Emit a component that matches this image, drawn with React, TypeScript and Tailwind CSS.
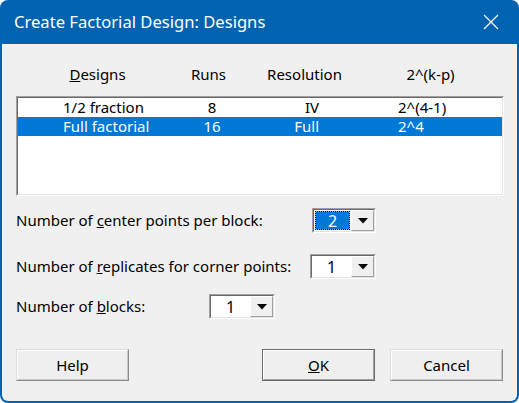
import React from "react";

const FONT = "font-['Noto_Sans',_'Open_Sans',_sans-serif]";

function Arrow() {
  return (
    <svg width="10" height="6" viewBox="0 0 10 6" aria-hidden="true">
      <path d="M0 0 H10 L5 5.5 Z" fill="#000" />
    </svg>
  );
}

function Combo({ value, width, focused }: { value: string; width: string; focused?: boolean }) {
  return (
    <div
      className={`${width} h-[25px] border border-t-[#a0a0a0] border-l-[#a0a0a0] border-b-white border-r-white`}
    >
      <div className="flex h-full border border-t-[#696969] border-l-[#696969] border-b-[#e3e3e3] border-r-[#e3e3e3] bg-white">
        <div className="flex flex-1 items-center p-px">
          {focused ? (
            <div className="h-full w-full bg-[#e89a3c]">
              <div className="flex h-full w-full items-center justify-center border border-dotted border-black bg-[#0078d7] bg-clip-padding text-[16px] leading-none text-white">
                {value}
              </div>
            </div>
          ) : (
            <div className="flex h-full w-full items-center justify-center text-[16px] leading-none text-black">
              {value}
            </div>
          )}
        </div>
        <div className="flex w-[23px] items-center justify-center border border-t-white border-l-white border-b-[#a0a0a0] border-r-[#a0a0a0] bg-[#f0f0f0]">
          <Arrow />
        </div>
      </div>
    </div>
  );
}

function Button({ label, def }: { label: React.ReactNode; def?: boolean }) {
  return (
    <button
      type="button"
      className={`flex h-[32px] w-[113px] items-center justify-center text-[15px] text-black ${
        def ? "border border-[#6b6b6b]" : "border border-t-[#dcdcdc] border-l-[#dcdcdc] border-b-[#8c8c8c] border-r-[#8c8c8c]"
      }`}
    >
      <span
        className={`flex h-full w-full items-center justify-center bg-[#efefef] ${
          def ? "border border-t-white border-l-white border-b-[#a0a0a0] border-r-[#a0a0a0]" : "border border-t-white border-l-white border-b-[#c8c8c8] border-r-[#c8c8c8]"
        }`}
      >
        {label}
      </span>
    </button>
  );
}

const rows = [
  { design: "1/2 fraction", runs: "8", res: "IV", exp: "2^(4-1)", selected: false },
  { design: "Full factorial", runs: "16", res: "Full", exp: "2^4", selected: true },
];

export default function App() {
  return (
    <div className={`h-[403px] w-[519px] bg-white ${FONT}`}>
      <div className="flex h-full flex-col overflow-hidden rounded-[8px] bg-[#0063b1] px-[2px] pb-[2px]">
        <div className="flex h-[44px] shrink-0 items-center justify-between pl-[12px] pr-[18px] text-white">
          <span className="text-[16.6px] leading-none">Create Factorial Design: Designs</span>
          <svg width="16" height="16" viewBox="0 0 16 16" aria-hidden="true">
            <path d="M1 1 L15 15 M15 1 L1 15" stroke="#fff" strokeWidth="1.2" />
          </svg>
        </div>

        <div className="flex flex-1 flex-col rounded-b-[6px] bg-[#f0f0f0] px-[14px] pt-[20px] text-black">
          <div className="flex h-[20px] items-center text-[15px] leading-none">
            <span className="w-[163px] text-center">
              <u>D</u>esigns
            </span>
            <span className="w-[59px] text-center">Runs</span>
            <span className="w-[133px] text-center">Resolution</span>
            <span className="w-[119px] text-center">2^(k-p)</span>
          </div>

          <div className="mt-[12px] h-[100px] w-[488px] border border-t-[#a0a0a0] border-l-[#a0a0a0] border-b-white border-r-white">
            <div className="h-full border border-t-[#696969] border-l-[#696969] border-b-[#e3e3e3] border-r-[#e3e3e3] bg-white">
              {rows.map((r) => (
                <div
                  key={r.design}
                  className={`grid h-[19px] grid-cols-[162px_64px_75px_1fr] items-center text-[15px] leading-none ${
                    r.selected ? "bg-[#0078d7] text-white" : "text-black"
                  }`}
                >
                  <span className="pl-[45px]">{r.design}</span>
                  <span className="text-center">{r.runs}</span>
                  <span className="text-right">{r.res}</span>
                  <span className="pl-[79px]">{r.exp}</span>
                </div>
              ))}
            </div>
          </div>

          <div className="mt-[12px] flex items-center text-[15px]">
            <span className="w-[296px]">
              Number of <u>c</u>enter points per block:
            </span>
            <Combo value="2" width="w-[64px]" focused />
          </div>

          <div className="mt-[21px] flex items-center text-[15px]">
            <span className="w-[294px]">
              Number of <u>r</u>eplicates for corner points:
            </span>
            <Combo value="1" width="w-[66px]" />
          </div>

          <div className="mt-[15px] flex items-center text-[15px]">
            <span className="w-[193px]">
              Number of <u>b</u>locks:
            </span>
            <Combo value="1" width="w-[66px]" />
          </div>

          <div className="mt-[30px] flex items-center">
            <Button label="Help" />
            <div className="flex-1" />
            <Button
              def
              label={
                <span>
                  <u>O</u>K
                </span>
              }
            />
            <div className="w-[15px]" />
            <Button label="Cancel" />
          </div>
        </div>
      </div>
    </div>
  );
}
